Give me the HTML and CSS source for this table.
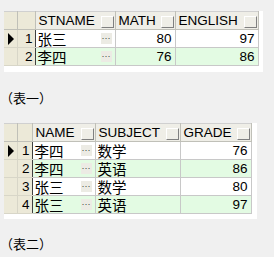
FILE: index.html
```html
<!DOCTYPE html>
<html>
<head>
<meta charset="utf-8">
<link rel="stylesheet" href="styles.css">
</head>
<body>
<div class="grid g1">
  <table>
    <colgroup><col class="w-ind"><col class="w-num1"><col class="w-a1"><col class="w-b1"><col class="w-c1"></colgroup>
    <tr class="hdr">
      <th class="ind"></th><th class="num"></th>
      <th><div class="hc"><span>STNAME</span><i class="hb"></i></div></th>
      <th><div class="hc"><span>MATH</span><i class="hb"></i></div></th>
      <th><div class="hc"><span>ENGLISH</span><i class="hb"></i></div></th>
    </tr>
    <tr class="r-odd">
      <td class="ind"><i class="arrow"></i></td><td class="num">1</td>
      <td class="cn"><div class="nc"><span>张三</span><i class="dots">···</i></div></td>
      <td class="n">80</td><td class="n">97</td>
    </tr>
    <tr class="r-even">
      <td class="ind"></td><td class="num">2</td>
      <td class="cn"><div class="nc"><span>李四</span><i class="dots">···</i></div></td>
      <td class="n">76</td><td class="n">86</td>
    </tr>
  </table>
</div>
<p class="cap cap1">（表一）</p>
<div class="grid g2">
  <table>
    <colgroup><col class="w-ind"><col class="w-num2"><col class="w-a2"><col class="w-b2"><col class="w-c2"></colgroup>
    <tr class="hdr">
      <th class="ind"></th><th class="num"></th>
      <th><div class="hc"><span>NAME</span><i class="hb"></i></div></th>
      <th><div class="hc"><span>SUBJECT</span><i class="hb"></i></div></th>
      <th><div class="hc"><span>GRADE</span><i class="hb"></i></div></th>
    </tr>
    <tr class="r-odd">
      <td class="ind"><i class="arrow"></i></td><td class="num">1</td>
      <td class="cn"><div class="nc"><span>李四</span><i class="dots">···</i></div></td>
      <td class="cn">数学</td><td class="n">76</td>
    </tr>
    <tr class="r-even">
      <td class="ind"></td><td class="num">2</td>
      <td class="cn"><div class="nc"><span>李四</span><i class="dots">···</i></div></td>
      <td class="cn">英语</td><td class="n">86</td>
    </tr>
    <tr class="r-odd">
      <td class="ind"></td><td class="num">3</td>
      <td class="cn"><div class="nc"><span>张三</span><i class="dots">···</i></div></td>
      <td class="cn">数学</td><td class="n">80</td>
    </tr>
    <tr class="r-even">
      <td class="ind"></td><td class="num">4</td>
      <td class="cn"><div class="nc"><span>张三</span><i class="dots">···</i></div></td>
      <td class="cn">英语</td><td class="n">97</td>
    </tr>
  </table>
</div>
<p class="cap cap2">（表二）</p>
</body>
</html>
```
FILE: styles.css
```css
html, body {
  margin: 0;
  padding: 0;
  background: #f0f0f0;
}
body {
  padding: 11px 0 0 4px;
  font-family: "Liberation Sans", "Noto Sans CJK SC", sans-serif;
  color: #000;
}
.grid {
  background: #fff;
}
.g1 { width: 259px; height: 61px; }
.g2 { width: 253px; height: 96px; margin-top: 18px; }
table {
  border-collapse: collapse;
  table-layout: fixed;
}
.w-ind { width: 13px; }
.w-num1 { width: 18px; }
.w-num2 { width: 15px; }
.w-a1 { width: 80px; }
.w-b1 { width: 60px; }
.w-c1 { width: 83px; }
.w-a2 { width: 63px; }
.w-b2 { width: 85px; }
.w-c2 { width: 71px; }
tr { height: 18px; }
th, td {
  padding: 0;
  height: 17px;
  border: 1px solid #c8c8c8;
  font-size: 13.5px;
  line-height: 17px;
  white-space: nowrap;
  overflow: hidden;
}
table tr > :first-child { border-left: none; }
th {
  background: #efeee7;
  font-weight: normal;
  text-align: left;
  border-color: #c0c0b8;
  border-top: 1px solid #d0d0d0;
}
th.ind, th.num { background: #ece9d8; }
td.ind, td.num {
  background: #ece9d8;
  border-color: #d8d6c8;
}
td.num {
  text-align: right;
  padding-right: 2px;
  border-right: 1px solid #404040;
}
.hc {
  display: flex;
  align-items: center;
  justify-content: space-between;
  padding: 0 1px 0 3px;
}
.hb {
  display: block;
  width: 11px;
  height: 10px;
  background: #efeee7;
  border-top: 1px solid #fff;
  border-left: 1px solid #fff;
  border-right: 1px solid #808080;
  border-bottom: 1px solid #808080;
  margin-top: 3px;
}
.r-odd td:not(.ind):not(.num) { background: #fff; }
.r-even td:not(.ind):not(.num) { background: #e3fbe3; }
.cn {
  font-family: "Noto Sans CJK SC", sans-serif;
  font-size: 14.5px;
  padding-left: 2px;
}
.nc {
  display: flex;
  align-items: center;
  justify-content: space-between;
  padding-right: 3px;
}
.dots {
  font-style: normal;
  font-family: "Liberation Sans", sans-serif;
  font-size: 9px;
  line-height: 11px;
  width: 11px;
  height: 11px;
  text-align: center;
  background: #ecebe4;
  color: #404040;
}
.n {
  text-align: right;
  padding-right: 3px;
}
.ind { position: relative; }
.arrow {
  display: block;
  width: 0;
  height: 0;
  margin-left: 4px;
  border-top: 6px solid transparent;
  border-bottom: 6px solid transparent;
  border-left: 6px solid #000;
}
.cap {
  margin: 0;
  font-family: "Noto Sans CJK SC", sans-serif;
  font-size: 13px;
  line-height: 15px;
  margin-left: -4px;
}
.cap1 { margin-top: 18px; }
.cap2 { margin-top: 17px; }
```
